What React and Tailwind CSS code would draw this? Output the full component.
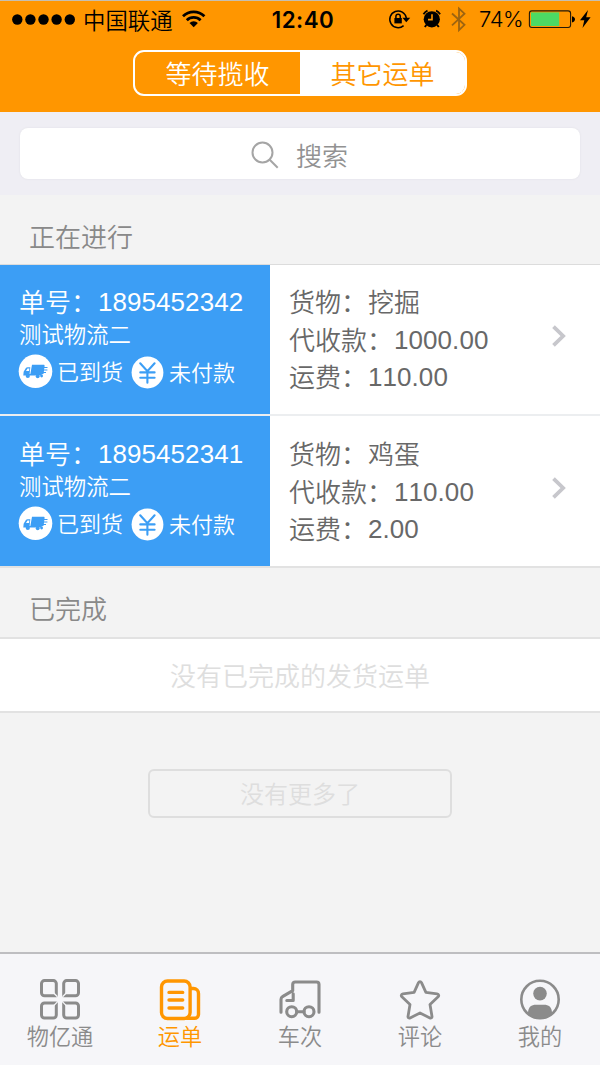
const han = "[font-family:'Noto_Sans_CJK_SC_DemiLight','Noto_Sans_CJK_SC',sans-serif] [font-weight:350]";
const digits = "[font-family:'Liberation_Sans',sans-serif] font-normal [font-kerning:none] text-[26px]";

const orders = [
  { no: '1895452342', goods: '挖掘', cod: '1000.00', fee: '110.00' },
  { no: '1895452341', goods: '鸡蛋', cod: '110.00', fee: '2.00' },
];

function StatusBar() {
  return (
    <div className="flex h-[38px] items-center text-black">
      <svg className="ml-3 shrink-0" width="64" height="40" fill="currentColor">
        {[5.3, 18.4, 31.5, 44.6, 57.8].map((x) => <circle key={x} cx={x} cy="19.5" r="5.2" />)}
      </svg>
      <span className="ml-[7px] w-[90px] pb-[2px] text-[22.4px] leading-9 whitespace-nowrap">中国联通</span>
      <svg className="ml-[8px] shrink-0" width="26" height="40" viewBox="0 0 26 40" fill="none" stroke="currentColor" strokeWidth="2.8">
        <path d="M2 16.2a15.3 15.3 0 0 1 21.4 0M5.8 20.2a9.8 9.8 0 0 1 13.8 0" />
        <path d="M12.7 27.2 8.5 23a6 6 0 0 1 8.4 0Z" fill="currentColor" stroke="none" />
      </svg>
      <span className="ml-[64px] w-[64px] pb-px text-center font-[Inter] text-[22.3px] leading-9 font-semibold tracking-[0.5px]">12:40</span>
      <svg className="ml-[53px] shrink-0" width="24" height="40" viewBox="0 0 24 40" fill="none" stroke="currentColor" strokeWidth="1.5">
        <path d="M15.6 25.6A8.3 8.3 0 1 1 18.3 18" />
        <path d="M14.4 17.8h7.8l-3.9 4.4Z" fill="currentColor" stroke="none" />
        <rect x="6.4" y="18" width="7.4" height="5.4" fill="currentColor" stroke="none" />
        <path d="M7.9 18.4v-2a2.2 2.2 0 0 1 4.4 0v2" />
      </svg>
      <svg className="ml-[9px] shrink-0" width="22" height="40" viewBox="0 0 22 40" fill="none" stroke="currentColor">
        <circle cx="10.8" cy="19.3" r="8.1" fill="currentColor" stroke="none" />
        <path d="M2.5 14.2a9 9 0 0 1 4-3.6M15.1 10.6a9 9 0 0 1 4 3.6" strokeWidth="1.8" />
        <path d="m5.4 25-1.6 2M16.2 25l1.6 2" strokeWidth="2" />
        <path d="M11 14.2v5.4H7" stroke="#ff9600" strokeWidth="1.6" />
      </svg>
      <svg className="ml-[8px] shrink-0 text-[#9d6410]" width="16" height="40" viewBox="0 0 16 40" fill="none" stroke="currentColor" strokeWidth="1.8">
        <path d="m1 13.5 12.5 11.3L8 30.2V8.5l5.5 5.2L1 25.4" />
      </svg>
      <span className="ml-[12px] w-[46px] pb-[2px] font-[Inter] text-[22px] leading-9 tracking-[-0.4px]">74%</span>
      <svg className="ml-[3px] shrink-0" width="66" height="40" viewBox="0 0 66 40" fill="none">
        <rect x="1.4" y="10.9" width="41.2" height="16.6" rx="2.5" stroke="#241908" strokeWidth="1.1" />
        <rect x="3" y="12.4" width="28.2" height="13.6" fill="#4cd964" />
        <path d="M44 16.2c4 .9 4 5.3 0 6.2Z" fill="black" />
        <path d="m60 10-8 10.2h4.3L54.5 28 62.6 17.2h-4.4Z" fill="black" />
      </svg>
    </div>
  );
}

function SegmentedControl() {
  return (
    <div className="mx-auto mt-[11px] flex h-[46px] w-[334px] overflow-hidden rounded-[11px] border-2 border-white text-[26px]">
      <button className="flex-1 leading-[42px] text-white">等待揽收</button>
      <button className="flex-1 bg-white leading-[42px] text-[#ff9600]">其它运单</button>
    </div>
  );
}

function TruckBadge() {
  return (
    <svg className="-ml-px shrink-0" width="35" height="35" viewBox="0 0 35 35">
      <circle cx="17.5" cy="17.3" r="16.8" fill="white" />
      <g fill="#3c9ef5">
        <path d="M14 10.8h11.5c.8 0 1.2.5 1.1 1.3l-.9 7c-.1.8-.5 1.2-1.3 1.2H12.3Z" />
        <path d="M12.3 13.2H9.6c-.7 0-1.3.3-1.7.9l-2 3.2c-.2.3-.3.6-.3 1l-.3 3.3h18.2l.2-1.5H11.6Z" />
        <circle cx="9.8" cy="21.9" r="2.1" />
        <circle cx="19.7" cy="22.3" r="1.9" />
        <circle cx="23.6" cy="22" r="1.4" />
        <path d="M25.5 12.9h4v1h-4ZM25 15.4h4.4v1H25ZM24.8 17.9h3.2v1h-3.2Z" />
      </g>
      <path d="M9.5 14.6h1.9l-.3 2.4H8Z" fill="white" />
    </svg>
  );
}

function YenBadge() {
  return (
    <svg className="shrink-0" width="33" height="33" viewBox="0 0 33 33">
      <circle cx="16.5" cy="16.5" r="15.9" fill="white" />
      <path d="m9.2 7.3 7.2 7.8 7.2-7.8M9.3 16.4h14.3M9.3 21.8h14.3M16.4 15.3v11.5" fill="none" stroke="#3c9ef5" strokeWidth="2.1" strokeLinecap="round" />
    </svg>
  );
}

function Amount({ label, value }) {
  return (
    <div className="flex h-[37.6px]">
      <span>{label}：</span>
      <span className={`${digits} ml-[1px] pt-[2px] tracking-[0.06px]`}>{value}</span>
    </div>
  );
}

function OrderRow({ order, last }) {
  return (
    <article className={last ? 'flex h-[150px] bg-white' : 'flex h-[151px] border-b-2 border-[#eceef0] bg-white'}>
      <div className={last ? 'h-full w-[270px] bg-[#3c9ef5] pt-[18px] pl-[19px] text-white' : 'h-full w-[270px] bg-[#3c9ef5] pt-[17px] pl-[19px] text-white'}>
        <div className="flex h-[38px] text-[26px] leading-[38px]">
          <span className="w-[78px]">单号：</span><span className={`${digits} ml-px pt-px tracking-[0.06px]`}>{order.no}</span>
        </div>
        <div className="-mt-1 h-[37px] text-[22.4px] leading-[34px]">测试物流二</div>
        <div className="flex h-[36px] items-center text-[22px] leading-[34px]">
          <TruckBadge />
          <span className="ml-[4px] w-[67px] pb-[3px]">已到货</span>
          <span className="ml-[7px] mt-[2px]"><YenBadge /></span>
          <span className="ml-[5px]">未付款</span>
        </div>
      </div>
      <div className={last ? 'flex-1 pt-[18px] pl-[19px] text-[26px] leading-[37.6px] text-[#686868]' : 'flex-1 pt-[17px] pl-[19px] text-[26px] leading-[37.6px] text-[#686868]'}>
        <div className="flex h-[37.6px]"><span>货物：</span><span className="ml-px">{order.goods}</span></div>
        <Amount label="代收款" value={order.cod} />
        <Amount label="运费" value={order.fee} />
      </div>
      <div className={last ? 'flex w-[50px] items-center pb-[6px]' : 'flex w-[50px] items-center pb-[7px]'}>
        <svg width="18" height="24" viewBox="0 0 18 24" fill="none" stroke="#c7c7cc" strokeWidth="3.8"><path d="m3.5 2.7 9.6 9.3-9.6 9.3" /></svg>
      </div>
    </article>
  );
}

const tabs = [
  { label: '物亿通', icon: (
    <g>
      <g strokeWidth="3">
        <path d="M18.3 17.7V5.6a3 3 0 0 0-3-3H6.5a3 3 0 0 0-3 3v9.1a3 3 0 0 0 3 3h11.8Z" />
        <path d="M25.7 17.7V5.6a3 3 0 0 1 3-3h8.8a3 3 0 0 1 3 3v9.1a3 3 0 0 1-3 3H25.7Z" />
        <path d="M18.3 24.9V37a3 3 0 0 1-3 3H6.5a3 3 0 0 1-3-3v-9.1a3 3 0 0 1 3-3h11.8Z" />
        <path d="M25.7 24.9V37a3 3 0 0 0 3 3h8.8a3 3 0 0 0 3-3v-9.1a3 3 0 0 0-3-3H25.7Z" />
      </g>
      <path d="m14.8 14 4.6 4.7M29.2 14l-4.6 4.7M14.8 28.6l4.6-4.7M29.2 28.6l-4.6-4.7" stroke="#f6f6f9" strokeWidth="1.3" />
    </g>
  ) },
  { label: '运单', active: true, icon: (
    <g strokeWidth="3.4">
      <rect x="3.5" y="3" width="28.6" height="37.5" rx="6" />
      <path d="M33 10.5h2.5a5 5 0 0 1 5 5v21a4 4 0 0 1-4 3.8H29M11 14.4h13.7M11 22h13.7M11 30h13.7" strokeLinecap="round" />
    </g>
  ) },
  { label: '车次', icon: (
    <g strokeWidth="3.1">
      <path d="M3 34.2V21.5c0-1.3.4-2.2 1.5-2.8l10.2-6V6.5c0-1.5 1-2.5 2.5-2.5h21.3c1.5 0 2.5 1 2.5 2.5v27.7M19 33.7h7M8.8 22.5h6.4v-6.8" strokeLinecap="round" />
      <circle cx="13.7" cy="33.7" r="5" /><circle cx="31" cy="33.7" r="5" />
    </g>
  ) },
  { label: '评论', icon: (
    <path d="M22 3.6c.8 0 1.2.4 1.5 1l4.4 9.8 11.2 1.5c1.7.3 2.1 1.8 1 2.9L32 26.4l2 12c.2 1.4-1 2.1-2.1 1.5l-9.9-5-9.9 5c-1.1.6-2.3-.1-2.1-1.5l2-12-8.1-7.6c-1.1-1.1-.7-2.6 1-2.9l11.2-1.5 4.4-9.8c.3-.6.7-1 1.5-1Z" strokeWidth="2.8" />
  ) },
  { label: '我的', icon: (
    <g strokeWidth="2.6">
      <circle cx="22" cy="21.5" r="18.7" /><circle cx="22" cy="15.6" r="6.8" fill="currentColor" stroke="none" />
      <path d="M10 35c0-6 3.5-8.2 8-8.2h8c4.5 0 8 2.2 8 8.2-6.5 7-17.5 7-24 0Z" fill="currentColor" stroke="none" />
    </g>
  ) },
];

function TabBar() {
  return (
    <nav className="flex h-[113px] border-t-2 border-[#bebec1] bg-[#f6f6f9]">
      {tabs.map((tab) => (
        <button key={tab.label} className={tab.active ? 'flex w-[120px] flex-col items-center pt-[24px] text-[#ff9600]' : 'flex w-[120px] flex-col items-center pt-[24px] text-[#8b8b8b]'}>
          <svg width="44" height="44" viewBox="0 0 44 44" fill="none" stroke="currentColor" strokeLinejoin="round">{tab.icon}</svg>
          <span className="mt-[-4px] text-[22.2px] leading-[34px]">{tab.label}</span>
        </button>
      ))}
    </nav>
  );
}

export default function App() {
  return (
    <div className={`${han} flex h-[1065px] w-[600px] flex-col overflow-hidden bg-[#f3f3f3]`}>
      <header className="h-[112px] border-t border-[#c6bfb0] bg-[#ff9600]">
        <StatusBar />
        <SegmentedControl />
      </header>
      <div className="h-[83px] bg-[#efeef4] px-5 pt-4">
        <div className="flex h-[51px] items-center justify-center rounded-lg bg-white pr-[2px] text-[26px] text-[#929292] shadow-[0_0_2px_#dddde2]">
          <svg className="mt-[3px]" width="30" height="30" viewBox="0 0 30 30" fill="none" stroke="#a5a5a5" strokeWidth="2"><circle cx="12.5" cy="12.5" r="10" /><path d="m19.5 19.5 8.2 8.2" /></svg>
          <span className="ml-4 pt-[2px] leading-[49px]">搜索</span>
        </div>
      </div>
      <h2 className="h-[70px] border-b border-[#dcdcdc] pt-[16px] pl-[29px] text-[26px] leading-[50px] [font-weight:350] text-[#898989]">正在进行</h2>
      <main>
        <OrderRow order={orders[0]} />
        <OrderRow order={orders[1]} last />
        <h2 className="h-[73px] border-y-2 border-[#e2e2e2] pt-[15px] pl-[29px] text-[26px] leading-[50px] [font-weight:350] text-[#898989]">已完成</h2>
        <div className="h-[74px] border-b-2 border-[#e2e2e2] bg-white text-center text-[26px] leading-[71px] text-[#dedede]">没有已完成的发货运单</div>
        <button className="mx-auto mt-[56px] block h-[49px] w-[304px] rounded-md border-2 border-[#dedede] pb-px text-[24px] leading-[44px] text-[#dedede]">没有更多了</button>
      </main>
      <div className="flex-1" />
      <TabBar />
    </div>
  );
}
